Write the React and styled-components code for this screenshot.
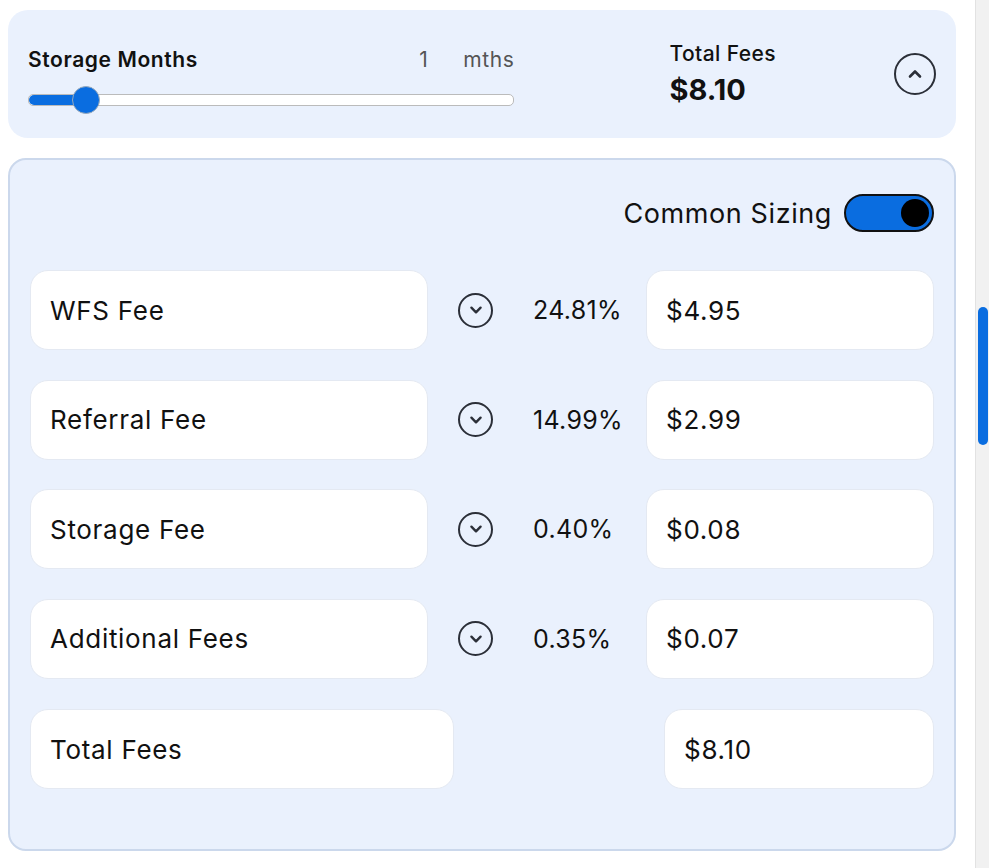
import React, { useState } from "react"
import styled, { createGlobalStyle } from "styled-components"

const Global = createGlobalStyle`
  html, body { margin: 0; padding: 0; background: #fff; }
  body { font-family: Inter, "Noto Sans", sans-serif; color: #111; }
`

const Page = styled.div`
  display: flex;
  width: 989px;
  height: 868px;
  overflow: hidden;
`

const Main = styled.div`
  width: 948px;
  padding: 10px 0 0 8px;
  display: flex;
  flex-direction: column;
  gap: 20px;
`

const Scrollbar = styled.div`
  margin-left: 19px;
  width: 14px;
  background: #f1f1f1;
  border-left: 1px solid #e2e2e2;
  padding-top: 307px;
  display: flex;
  justify-content: center;
`

const Thumb = styled.div`
  width: 10px;
  height: 138px;
  border-radius: 5px;
  background: #0a6de0;
`

const TopCard = styled.div`
  height: 128px;
  background: #eaf1fd;
  border-radius: 20px;
  display: flex;
  align-items: center;
  padding: 0 20px;
  box-sizing: border-box;
`

const SliderBlock = styled.div`
  width: 490px;
  display: flex;
  flex-direction: column;
  gap: 22px;
  margin-top: 4px;
`

const SliderHead = styled.div`
  display: flex;
  align-items: center;
  font-size: 21px;
  letter-spacing: 0.6px;
`

const SliderLabel = styled.span`
  font-weight: 600;
  flex: 1;
`

const MonthValue = styled.span`
  color: #555;
  width: 44px;
`

const Unit = styled.span`
  color: #555;
`

const Track = styled.div`
  position: relative;
  height: 10px;
  border-radius: 5px;
  background: #fff;
  border: 1px solid #bbb;
`

const Fill = styled.div`
  height: 100%;
  border-radius: 5px;
  background: #0a6de0;
`

const Knob = styled.div`
  position: absolute;
  top: 50%;
  width: 26px;
  height: 26px;
  border-radius: 50%;
  background: #0a6de0;
  border: 1px solid #9ab;
  transform: translate(-50%, -50%);
`

const TotalBlock = styled.div`
  margin-left: 155px;
  display: flex;
  flex-direction: column;
  gap: 6px;
  width: 208px;
`

const TotalLabel = styled.div`
  font-size: 21px;
  font-weight: 500;
  letter-spacing: 0.4px;
`

const TotalValue = styled.div`
  font-size: 29px;
  font-weight: 700;
`

const CircleBtn = styled.button`
  width: ${(p) => p.size}px;
  height: ${(p) => p.size}px;
  border-radius: 50%;
  border: 2px solid #2b2f38;
  background: transparent;
  padding: 0;
  display: flex;
  align-items: center;
  justify-content: center;
  color: #2b2f38;
`

const Panel = styled.div`
  height: 693px;
  box-sizing: border-box;
  background: #eaf1fd;
  border: 2px solid #cbd8ec;
  border-radius: 18px;
  padding: 34px 20px 0 20px;
`

const ToggleRow = styled.div`
  display: flex;
  justify-content: flex-end;
  align-items: center;
  gap: 12px;
  font-size: 27px;
  letter-spacing: 0.6px;
  margin-bottom: 38px;
`

const Toggle = styled.div`
  width: 90px;
  height: 38px;
  box-sizing: border-box;
  border-radius: 19px;
  background: #0a6de0;
  border: 2px solid #111;
  display: flex;
  align-items: center;
  justify-content: flex-end;
  padding: 0 3px;
`

const ToggleDot = styled.div`
  width: 28px;
  height: 28px;
  border-radius: 50%;
  background: #000;
`

const Rows = styled.div`
  display: flex;
  flex-direction: column;
  gap: 29.5px;
`

const FeeRow = styled.div`
  display: grid;
  grid-template-columns: 398px 82px 136px 288px;
  align-items: center;
`

const TotalRow = styled.div`
  display: flex;
  justify-content: space-between;
  margin-top: 1px;
`

const Box = styled.div`
  width: ${(p) => (p.w ? p.w + "px" : "auto")};
  height: 80px;
  box-sizing: border-box;
  background: #fff;
  border: 1px solid #e4e9f2;
  border-radius: 18px;
  display: flex;
  align-items: center;
  padding-left: 19px;
  font-size: 26px;
  letter-spacing: 0.7px;
`

const ChevCell = styled.div`
  display: flex;
  justify-content: center;
  padding-left: 13px;
`

const Pct = styled.div`
  font-size: 25px;
  letter-spacing: 0.3px;
  padding-left: 23px;
`

const UpWrap = styled.div`
  margin-left: 18px;
`

const Chevron = ({ up, size }) => (
  <svg width={size} height={size} viewBox="0 0 24 24" fill="none" stroke="currentColor" strokeWidth="2.6" strokeLinecap="round" strokeLinejoin="round">
    <path d={up ? "M7 14.5l5-5 5 5" : "M7 9.5l5 5 5-5"} />
  </svg>
)

const fees = [
  { name: "WFS Fee", pct: "24.81%", value: "$4.95" },
  { name: "Referral Fee", pct: "14.99%", value: "$2.99" },
  { name: "Storage Fee", pct: "0.40%", value: "$0.08" },
  { name: "Additional Fees", pct: "0.35%", value: "$0.07" },
]

export default function App() {
  const [months] = useState(1)
  const pos = 57

  return (
    <Page>
      <Global />
      <Main>
        <TopCard>
          <SliderBlock>
            <SliderHead>
              <SliderLabel>Storage Months</SliderLabel>
              <MonthValue>{months}</MonthValue>
              <Unit>mths</Unit>
            </SliderHead>
            <Track>
              <Fill style={{ width: pos + "px" }} />
              <Knob style={{ left: pos + "px" }} />
            </Track>
          </SliderBlock>
          <TotalBlock>
            <TotalLabel>Total Fees</TotalLabel>
            <TotalValue>$8.10</TotalValue>
          </TotalBlock>
          <UpWrap>
            <CircleBtn size={42}>
              <Chevron up size={24} />
            </CircleBtn>
          </UpWrap>
        </TopCard>
        <Panel>
          <ToggleRow>
            Common Sizing
            <Toggle>
              <ToggleDot />
            </Toggle>
          </ToggleRow>
          <Rows>
            {fees.map((f) => (
              <FeeRow key={f.name}>
                <Box>{f.name}</Box>
                <ChevCell>
                  <CircleBtn size={35}>
                    <Chevron size={22} />
                  </CircleBtn>
                </ChevCell>
                <Pct>{f.pct}</Pct>
                <Box>{f.value}</Box>
              </FeeRow>
            ))}
            <TotalRow>
              <Box w={424}>Total Fees</Box>
              <Box w={270}>$8.10</Box>
            </TotalRow>
          </Rows>
        </Panel>
      </Main>
      <Scrollbar>
        <Thumb />
      </Scrollbar>
    </Page>
  )
}
